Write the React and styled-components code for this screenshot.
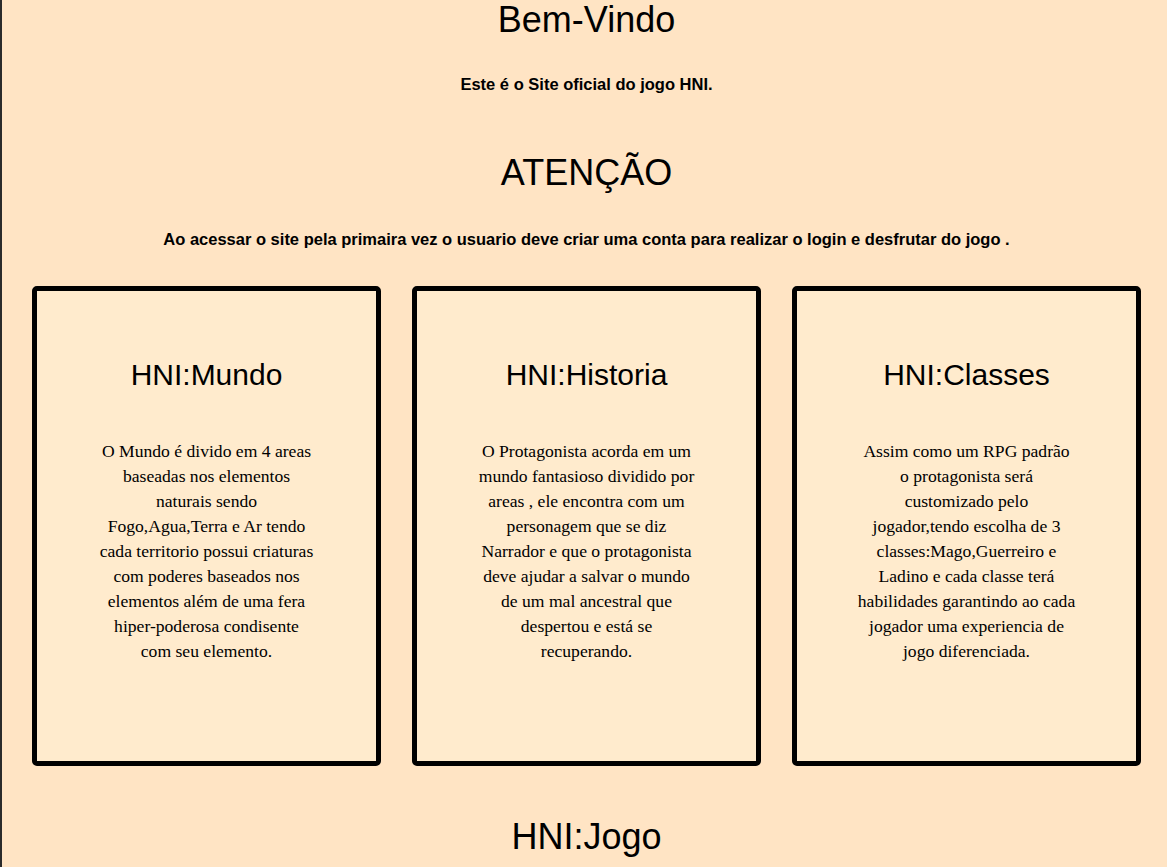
import React from "react";
import styled, { createGlobalStyle } from "styled-components";

const GlobalStyle = createGlobalStyle`
  html, body {
    margin: 0;
    padding: 0;
    background-color: #ffe4c4;
  }
  body {
    border-left: 2px solid #2b2b2b;
    min-height: 100vh;
    box-sizing: border-box;
    font-family: "Liberation Serif", serif;
    color: #000;
  }
`;

const Page = styled.div`
  padding-left: 4px;
  display: flex;
  flex-direction: column;
  align-items: stretch;
`;

const Title = styled.h1`
  font-family: "Liberation Sans", Arial, sans-serif;
  font-weight: 400;
  font-size: 36px;
  line-height: 40px;
  text-align: center;
  margin: ${(p) => p.$top || 0}px 0 0;
`;

const Lead = styled.p`
  font-family: "Liberation Sans", Arial, sans-serif;
  font-weight: 700;
  font-size: 16.5px;
  line-height: 18px;
  text-align: center;
  margin: ${(p) => p.$top || 0}px 0 0;
`;

const Cards = styled.section`
  display: grid;
  grid-template-columns: repeat(3, 1fr);
  gap: 31px;
  padding: 0 26px;
  margin-top: 38px;
`;

const Card = styled.article`
  height: 480px;
  box-sizing: border-box;
  border: 5px solid #000;
  border-radius: 5px;
  background-color: #ffebcd;
  display: flex;
  flex-direction: column;
  align-items: center;
  padding-top: 67px;
`;

const CardTitle = styled.h2`
  font-family: "Liberation Sans", Arial, sans-serif;
  font-weight: 400;
  font-size: 30px;
  line-height: 34px;
  margin: 0;
`;

const CardText = styled.p`
  font-family: "Liberation Serif", "Times New Roman", serif;
  font-size: 17.6px;
  line-height: 25px;
  text-align: center;
  margin: 47px 0 0;
`;

const Line = styled.span`
  display: block;
  white-space: nowrap;
`;

const cards = [
  {
    title: "HNI:Mundo",
    lines: [
      "O Mundo é divido em 4 areas",
      "baseadas nos elementos",
      "naturais sendo",
      "Fogo,Agua,Terra e Ar tendo",
      "cada territorio possui criaturas",
      "com poderes baseados nos",
      "elementos além de uma fera",
      "hiper-poderosa condisente",
      "com seu elemento.",
    ],
  },
  {
    title: "HNI:Historia",
    lines: [
      "O Protagonista acorda em um",
      "mundo fantasioso dividido por",
      "areas , ele encontra com um",
      "personagem que se diz",
      "Narrador e que o protagonista",
      "deve ajudar a salvar o mundo",
      "de um mal ancestral que",
      "despertou e está se",
      "recuperando.",
    ],
  },
  {
    title: "HNI:Classes",
    lines: [
      "Assim como um RPG padrão",
      "o protagonista será",
      "customizado pelo",
      "jogador,tendo escolha de 3",
      "classes:Mago,Guerreiro e",
      "Ladino e cada classe terá",
      "habilidades garantindo ao cada",
      "jogador uma experiencia de",
      "jogo diferenciada.",
    ],
  },
];

const App = () => {
  return (
    <>
      <GlobalStyle />
      <Page>
        <Title>Bem-Vindo</Title>
        <Lead $top={35}>Este é o Site oficial do jogo HNI.</Lead>
        <Title $top={60}>ATENÇÃO</Title>
        <Lead $top={37}>
          Ao acessar o site pela primaira vez o usuario deve criar uma conta
          para realizar o login e desfrutar do jogo .
        </Lead>
        <Cards>
          {cards.map((c) => (
            <Card key={c.title}>
              <CardTitle>{c.title}</CardTitle>
              <CardText>
                {c.lines.map((l) => (
                  <Line key={l}>{l}</Line>
                ))}
              </CardText>
            </Card>
          ))}
        </Cards>
        <Title $top={51}>HNI:Jogo</Title>
      </Page>
    </>
  );
};

export default App;
